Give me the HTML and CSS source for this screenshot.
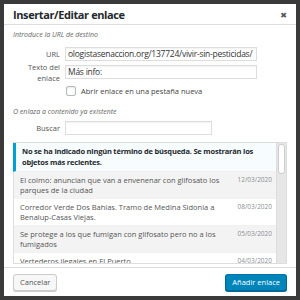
FILE: index.html
```html
<!DOCTYPE html>
<html lang="es">
<head>
    <meta charset="UTF-8">
    <title>Insertar/Editar enlace</title>
    <link rel="stylesheet" href="styles.css">
</head>
<body>
    <div class="dialog">
        <div class="dialog-header">
            <h1>Insertar/Editar enlace</h1>
            <span class="close">&#x2716;</span>
        </div>
        <div class="dialog-body">
            <p class="hint">Introduce la URL de destino</p>
            <div class="field url-row">
                <label>URL</label>
                <div class="input url">ologistasenaccion.org/137724/vivir-sin-pesticidas/</div>
            </div>
            <div class="field text-row">
                <label>Texto del enlace</label>
                <div class="input">Más info:</div>
            </div>
            <div class="check-row">
                <span class="checkbox"></span>
                <span>Abrir enlace en una pestaña nueva</span>
            </div>
            <p class="hint second">O enlaza a contenido ya existente</p>
            <div class="field search">
                <label>Buscar</label>
                <div class="input"></div>
            </div>
            <div class="results">
                <div class="results-list">
                    <div class="notice">No se ha indicado ningún término de búsqueda. Se mostrarán los objetos más recientes.</div>
                    <div class="item alt">
                        <span class="item-title">El colmo: anuncian que van a envenenar con glifosato los parques de la ciudad</span>
                        <span class="item-date">12/03/2020</span>
                    </div>
                    <div class="item">
                        <span class="item-title">Corredor Verde Dos Bahías. Tramo de Medina Sidonia a Benalup-Casas Viejas.</span>
                        <span class="item-date">08/03/2020</span>
                    </div>
                    <div class="item alt">
                        <span class="item-title">Se protege a los que fumigan con glifosato pero no a los fumigados</span>
                        <span class="item-date">05/03/2020</span>
                    </div>
                    <div class="item">
                        <span class="item-title">Vertederos ilegales en El Puerto</span>
                        <span class="item-date">04/03/2020</span>
                    </div>
                </div>
                <div class="scrollbar"><div class="thumb"></div></div>
            </div>
        </div>
        <div class="dialog-footer">
            <button class="btn">Cancelar</button>
            <button class="btn primary">Añadir enlace</button>
        </div>
    </div>
</body>
</html>
```

FILE: styles.css
```css
html, body {
    margin: 0;
    height: 100%;
}
body {
    background-color: #3a3a3a;
    padding: 4px;
    box-sizing: border-box;
    font-family: "Open Sans", "DejaVu Sans", sans-serif;
    color: #444;
}
.dialog {
    width: 292px;
    height: 292px;
    background-color: #fff;
    display: flex;
    flex-direction: column;
}
.dialog-header {
    flex: none;
    height: 20px;
    border-bottom: 1px solid #ddd;
    padding: 0 9px;
    display: flex;
    align-items: center;
    justify-content: space-between;
}
.dialog-header h1 {
    margin: 0;
    font-size: 11px;
    letter-spacing: -0.4px;
    font-weight: 700;
    color: #23282d;
}
.close {
    font-size: 8px;
    color: #555;
}
.dialog-body {
    flex: 1;
    padding: 5px 9px 0 9px;
    overflow: hidden;
}
.hint {
    margin: 0;
    font-size: 7px;
    font-style: italic;
    color: #666;
    line-height: 10px;
}
.hint.second {
    margin-top: 11px;
}
.field {
    display: flex;
    align-items: center;
    gap: 5px;
}
.field label {
    width: 47px;
    flex: none;
    text-align: right;
    font-size: 7.5px;
    line-height: 11px;
    color: #555;
}
.url-row {
    margin-top: 7px;
}
.text-row {
    margin-top: 1px;
    align-items: flex-start;
}
.text-row .input {
    margin-top: 3px;
}
.input {
    width: 192px;
    height: 14px;
    box-sizing: border-box;
    border: 1px solid #ddd;
    padding: 0 2px;
    font-size: 8.5px;
    letter-spacing: -0.25px;
    line-height: 12px;
    color: #333;
    white-space: nowrap;
    overflow: hidden;
    box-shadow: inset 0 1px 1px rgba(0, 0, 0, 0.05);
}
.check-row {
    display: flex;
    align-items: center;
    gap: 5px;
    height: 10px;
    margin: 2px 0 0 53px;
    font-size: 7.5px;
    color: #444;
}
.checkbox {
    width: 10px;
    height: 10px;
    box-sizing: border-box;
    border: 1px solid #b4b9be;
    border-radius: 2px;
    box-shadow: inset 0 1px 2px rgba(0, 0, 0, 0.1);
}
.field.search {
    margin-top: 4px;
}
.field.search .input {
    width: 147px;
}
.results {
    margin-top: 7px;
    height: 120px;
    border: 1px solid #ddd;
    border-left: 0;
    display: flex;
    overflow: hidden;
}
.results-list {
    flex: 1;
}
.notice {
    background-color: #f7fcfe;
    border-left: 3px solid #00a0d2;
    padding: 3px 6px;
    font-size: 7.5px;
    letter-spacing: -0.2px;
    font-weight: 700;
    line-height: 11px;
    color: #23282d;
    border-bottom: 1px solid #f1f1f1;
}
.item {
    display: flex;
    justify-content: space-between;
    align-items: flex-start;
    gap: 10px;
    padding: 3px 4px 3px 6px;
    font-size: 7.5px;
    line-height: 10px;
    color: #555;
    border-bottom: 1px solid #f1f1f1;
    border-left: 1px solid #ddd;
}
.item.alt {
    background-color: #f3f3f3;
}
.item-date {
    font-size: 6.5px;
    color: #8c8f94;
    white-space: nowrap;
}
.scrollbar {
    width: 9px;
    background-color: #e6e6e6;
    border-left: 1px solid #ddd;
}
.thumb {
    height: 28px;
    margin: 1px;
    background-color: #fff;
    border: 1px solid #ccc;
    border-radius: 3px;
}
.dialog-footer {
    flex: none;
    height: 28px;
    border-top: 1px solid #ddd;
    padding: 0 9px;
    display: flex;
    align-items: center;
    justify-content: space-between;
}
.btn {
    height: 17px;
    padding: 0 6px;
    font-family: inherit;
    font-size: 7.5px;
    line-height: 15px;
    color: #555;
    background-color: #f7f7f7;
    border: 1px solid #ccc;
    border-radius: 3px;
    box-shadow: 0 1px 0 #ccc;
}
.btn.primary {
    color: #fff;
    background-color: #0085ba;
    border-color: #0073aa #006799 #006799;
    box-shadow: 0 1px 0 #006799;
}
```
